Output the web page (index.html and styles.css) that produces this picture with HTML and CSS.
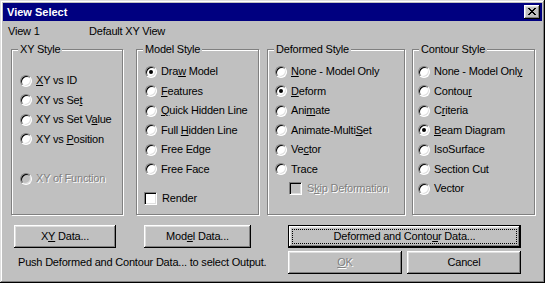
FILE: index.html
```html
<!DOCTYPE html>
<html>

<head>
    <title>View Select</title>
    <link rel="stylesheet" href="styles.css">
</head>

<body>
    <div class="window">
        <div class="titlebar">
            <span class="title">View Select</span>
            <span class="close">
                <svg width="8" height="7" viewBox="0 0 8 7">
                    <path fill="#000" d="M0 0h2v1H0z M6 0h2v1H6z M1 1h2v1H1z M5 1h2v1H5z M2 2h4v1H2z M3 3h2v1H3z M2 4h4v1H2z M1 5h2v1H1z M5 5h2v1H5z M0 6h2v1H0z M6 6h2v1H6z" />
                </svg>
            </span>
        </div>

        <div class="info">
            <span class="view-name">View 1</span>
            <span>Default XY View</span>
        </div>

        <div class="groups">
            <div class="group g-xy">
                <span class="legend">XY Style</span>
                <div class="opt"><span class="radio"></span><span><u>X</u>Y vs ID</span></div>
                <div class="opt"><span class="radio"></span><span>XY vs Se<u>t</u></span></div>
                <div class="opt"><span class="radio"></span><span>XY vs Set V<u>a</u>lue</span></div>
                <div class="opt"><span class="radio"></span><span>XY vs <u>P</u>osition</span></div>
                <div class="opt gap disabled"><span class="radio"></span><span>XY of Function</span></div>
            </div>

            <div class="group g-model">
                <span class="legend">Model Style</span>
                <div class="opt"><span class="radio on"></span><span>Dra<u>w</u> Model</span></div>
                <div class="opt"><span class="radio"></span><span><u>F</u>eatures</span></div>
                <div class="opt"><span class="radio"></span><span><u>Q</u>uick Hidden Line</span></div>
                <div class="opt"><span class="radio"></span><span>Full <u>H</u>idden Line</span></div>
                <div class="opt"><span class="radio"></span><span>Free Edge</span></div>
                <div class="opt"><span class="radio"></span><span>Free Face</span></div>
                <div class="opt render"><span class="check"></span><span>Render</span></div>
            </div>

            <div class="group g-deformed">
                <span class="legend">Deformed Style</span>
                <div class="opt"><span class="radio"></span><span><u>N</u>one - Model Only</span></div>
                <div class="opt"><span class="radio on"></span><span><u>D</u>eform</span></div>
                <div class="opt"><span class="radio"></span><span>Ani<u>m</u>ate</span></div>
                <div class="opt"><span class="radio"></span><span>Animate-Multi<u>S</u>et</span></div>
                <div class="opt"><span class="radio"></span><span>Ve<u>c</u>tor</span></div>
                <div class="opt"><span class="radio"></span><span>Trace</span></div>
                <div class="opt skip disabled"><span class="check"></span><span>S<u>k</u>ip Deformation</span></div>
            </div>

            <div class="group g-contour">
                <span class="legend">Contour Style</span>
                <div class="opt"><span class="radio"></span><span>None - Model Onl<u>y</u></span></div>
                <div class="opt"><span class="radio"></span><span>Contou<u>r</u></span></div>
                <div class="opt"><span class="radio"></span><span>C<u>r</u>iteria</span></div>
                <div class="opt"><span class="radio on"></span><span><u>B</u>eam Diagram</span></div>
                <div class="opt"><span class="radio"></span><span>IsoSurface</span></div>
                <div class="opt"><span class="radio"></span><span>Section Cut</span></div>
                <div class="opt"><span class="radio"></span><span>Vector</span></div>
            </div>
        </div>

        <div class="bottom">
            <div class="left-col">
                <div class="btn-row">
                    <div class="btn btn-xy">X<u>Y</u>&nbsp;Data...</div>
                    <div class="btn btn-model">Mod<u>e</u>l Data...</div>
                </div>
                <p class="status">Push Deformed and Contour Data... to select Output.</p>
            </div>
            <div class="right-col">
                <div class="btn btn-default">Deformed and Conto<u>u</u>r Data...</div>
                <div class="btn-pair">
                    <div class="btn disabled"><span><u>O</u>K</span></div>
                    <div class="btn">Cancel</div>
                </div>
            </div>
        </div>
    </div>
</body>

</html>
```

FILE: styles.css
```css
* {
    box-sizing: border-box;
}

body {
    margin: 0;
    font-family: "Liberation Sans", Arial, sans-serif;
    font-size: 11px;
    color: #000;
}

.window {
    width: 545px;
    height: 283px;
    padding: 3px;
    background: #c0c0c0;
    line-height: 13px;
    letter-spacing: -0.2px;
    box-shadow: inset -1px -1px #000, inset 1px 1px #dfdfdf,
        inset -2px -2px #808080, inset 2px 2px #fff;
}

u {
    text-decoration-thickness: 1px;
    text-underline-offset: 1px;
}

/* title bar */
.titlebar {
    display: flex;
    align-items: center;
    justify-content: space-between;
    height: 18px;
    padding: 0 2px 0 4px;
    background: #000080;
    color: #fff;
    font-weight: bold;
    letter-spacing: 0;
}

.close {
    display: block;
    width: 16px;
    height: 14px;
    padding: 3px 0 0 4px;
    background: #c0c0c0;
    box-shadow: inset -1px -1px #000, inset 1px 1px #fff,
        inset -2px -2px #808080, inset 2px 2px #dfdfdf;
}

.close svg {
    display: block;
}

.info {
    display: flex;
    height: 13px;
    margin-top: 4px;
    padding-left: 5px;
}

.info .view-name {
    width: 81px;
}

/* group boxes */
.groups {
    display: flex;
    height: 166px;
    margin-top: 11px;
    padding-left: 8px;
}

.group {
    position: relative;
    border: 1px solid #808080;
    padding: 12px 0 0 8px;
    box-shadow: inset 1px 1px #fff, 1px 1px #fff;
}

.legend {
    position: absolute;
    top: -7px;
    left: 6px;
    height: 13px;
    padding: 0 2px;
    background: #c0c0c0;
}

.g-xy {
    width: 112px;
    padding-top: 21px;
}

.g-model {
    width: 123px;
    margin-left: 13px;
}

.g-deformed {
    width: 138px;
    margin-left: 8px;
    padding-left: 7px;
}

.g-contour {
    width: 123px;
    margin-left: 7px;
    padding-left: 5px;
}

.opt {
    display: flex;
    align-items: center;
    height: 19.5px;
    white-space: nowrap;
}

.opt.gap {
    margin-top: 20px;
}

.opt.render {
    margin-top: 10px;
}

.opt.skip {
    padding-left: 15px;
}

.radio {
    position: relative;
    flex: none;
    width: 12px;
    height: 12px;
    margin-right: 4px;
    border-radius: 50%;
    border: 1px solid;
    border-color: #808080 #fff #fff #808080;
    background: #fff;
    box-shadow: inset 1px 1px #000, inset -1px -1px #dfdfdf;
}

.radio.on::after {
    content: "";
    position: absolute;
    top: 3px;
    left: 3px;
    width: 4px;
    height: 4px;
    border-radius: 50%;
    background: #000;
}

.check {
    flex: none;
    width: 13px;
    height: 13px;
    margin: 0 5px 0 -1px;
    border: 1px solid;
    border-color: #808080 #fff #fff #808080;
    background: #fff;
    box-shadow: inset 1px 1px #000, inset -1px -1px #dfdfdf;
}

.disabled {
    color: #808080;
    text-shadow: 1px 1px 0 #fff;
}

.disabled .radio,
.disabled .check {
    background: #c0c0c0;
}

/* buttons */
.bottom {
    display: flex;
    justify-content: space-between;
    margin-top: 10px;
    padding: 0 21px 0 11px;
}

.btn-row {
    display: flex;
    gap: 28px;
}

.btn {
    position: relative;
    display: flex;
    align-items: center;
    justify-content: center;
    height: 23px;
    white-space: nowrap;
    box-shadow: inset -1px -1px #000, inset 1px 1px #fff,
        inset -2px -2px #808080, inset 2px 2px #dfdfdf;
}

.btn-xy {
    width: 102px;
}

.btn-model {
    width: 107px;
}

.status {
    margin: 8px 0 0;
    padding-left: 4px;
}

.right-col {
    width: 233px;
}

.btn-default {
    border: 1px solid #000;
}

.btn-default::after {
    content: "";
    position: absolute;
    top: 3px;
    left: 3px;
    right: 3px;
    bottom: 3px;
    border: 1px dotted #000;
}

.btn-pair {
    display: flex;
    justify-content: space-between;
    margin-top: 3px;
}

.btn-pair .btn {
    width: 114px;
}
```
